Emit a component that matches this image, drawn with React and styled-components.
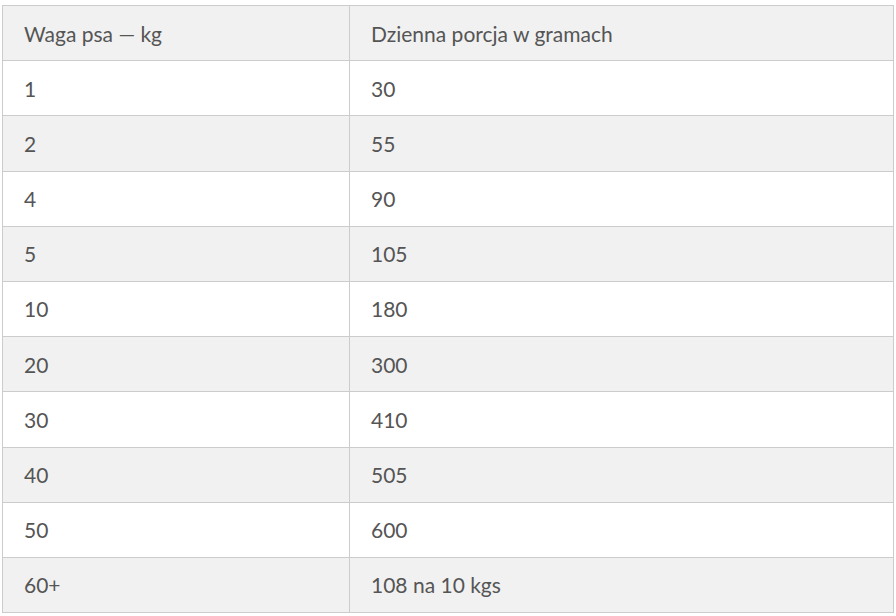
import styled, { createGlobalStyle } from 'styled-components';

const GlobalStyle = createGlobalStyle`
  html, body {
    margin: 0;
    padding: 0;
    background: #ffffff;
  }
  body {
    font-family: Lato, "Open Sans", sans-serif;
  }
`;

const Wrapper = styled.div`
  padding: 5px 2px 0 2px;
`;

const Table = styled.table`
  width: 892px;
  border-collapse: collapse;
  table-layout: fixed;
  color: #555555;
  font-size: 21px;
`;

const Row = styled.tr`
  height: 55.2px;
  background: ${({ $shaded }) => ($shaded ? '#f1f1f1' : '#ffffff')};
`;

const Cell = styled.td`
  border: 1px solid #cccccc;
  padding: 0 0 0 21px;
  text-align: left;
  vertical-align: middle;
  font-weight: 400;
  line-height: 1.2;
`;

const rows = [
  ['1', '30'],
  ['2', '55'],
  ['4', '90'],
  ['5', '105'],
  ['10', '180'],
  ['20', '300'],
  ['30', '410'],
  ['40', '505'],
  ['50', '600'],
  ['60+', '108 na 10 kgs'],
];

export default function App() {
  return (
    <>
      <GlobalStyle />
      <Wrapper>
        <Table>
          <colgroup>
            <col style={{ width: 347 }} />
            <col />
          </colgroup>
          <thead>
            <Row $shaded>
              <Cell as="th">Waga psa — kg</Cell>
              <Cell as="th">Dzienna porcja w gramach</Cell>
            </Row>
          </thead>
          <tbody>
            {rows.map(([weight, portion], i) => (
              <Row key={weight} $shaded={i % 2 === 1}>
                <Cell>{weight}</Cell>
                <Cell>{portion}</Cell>
              </Row>
            ))}
          </tbody>
        </Table>
      </Wrapper>
    </>
  );
}
